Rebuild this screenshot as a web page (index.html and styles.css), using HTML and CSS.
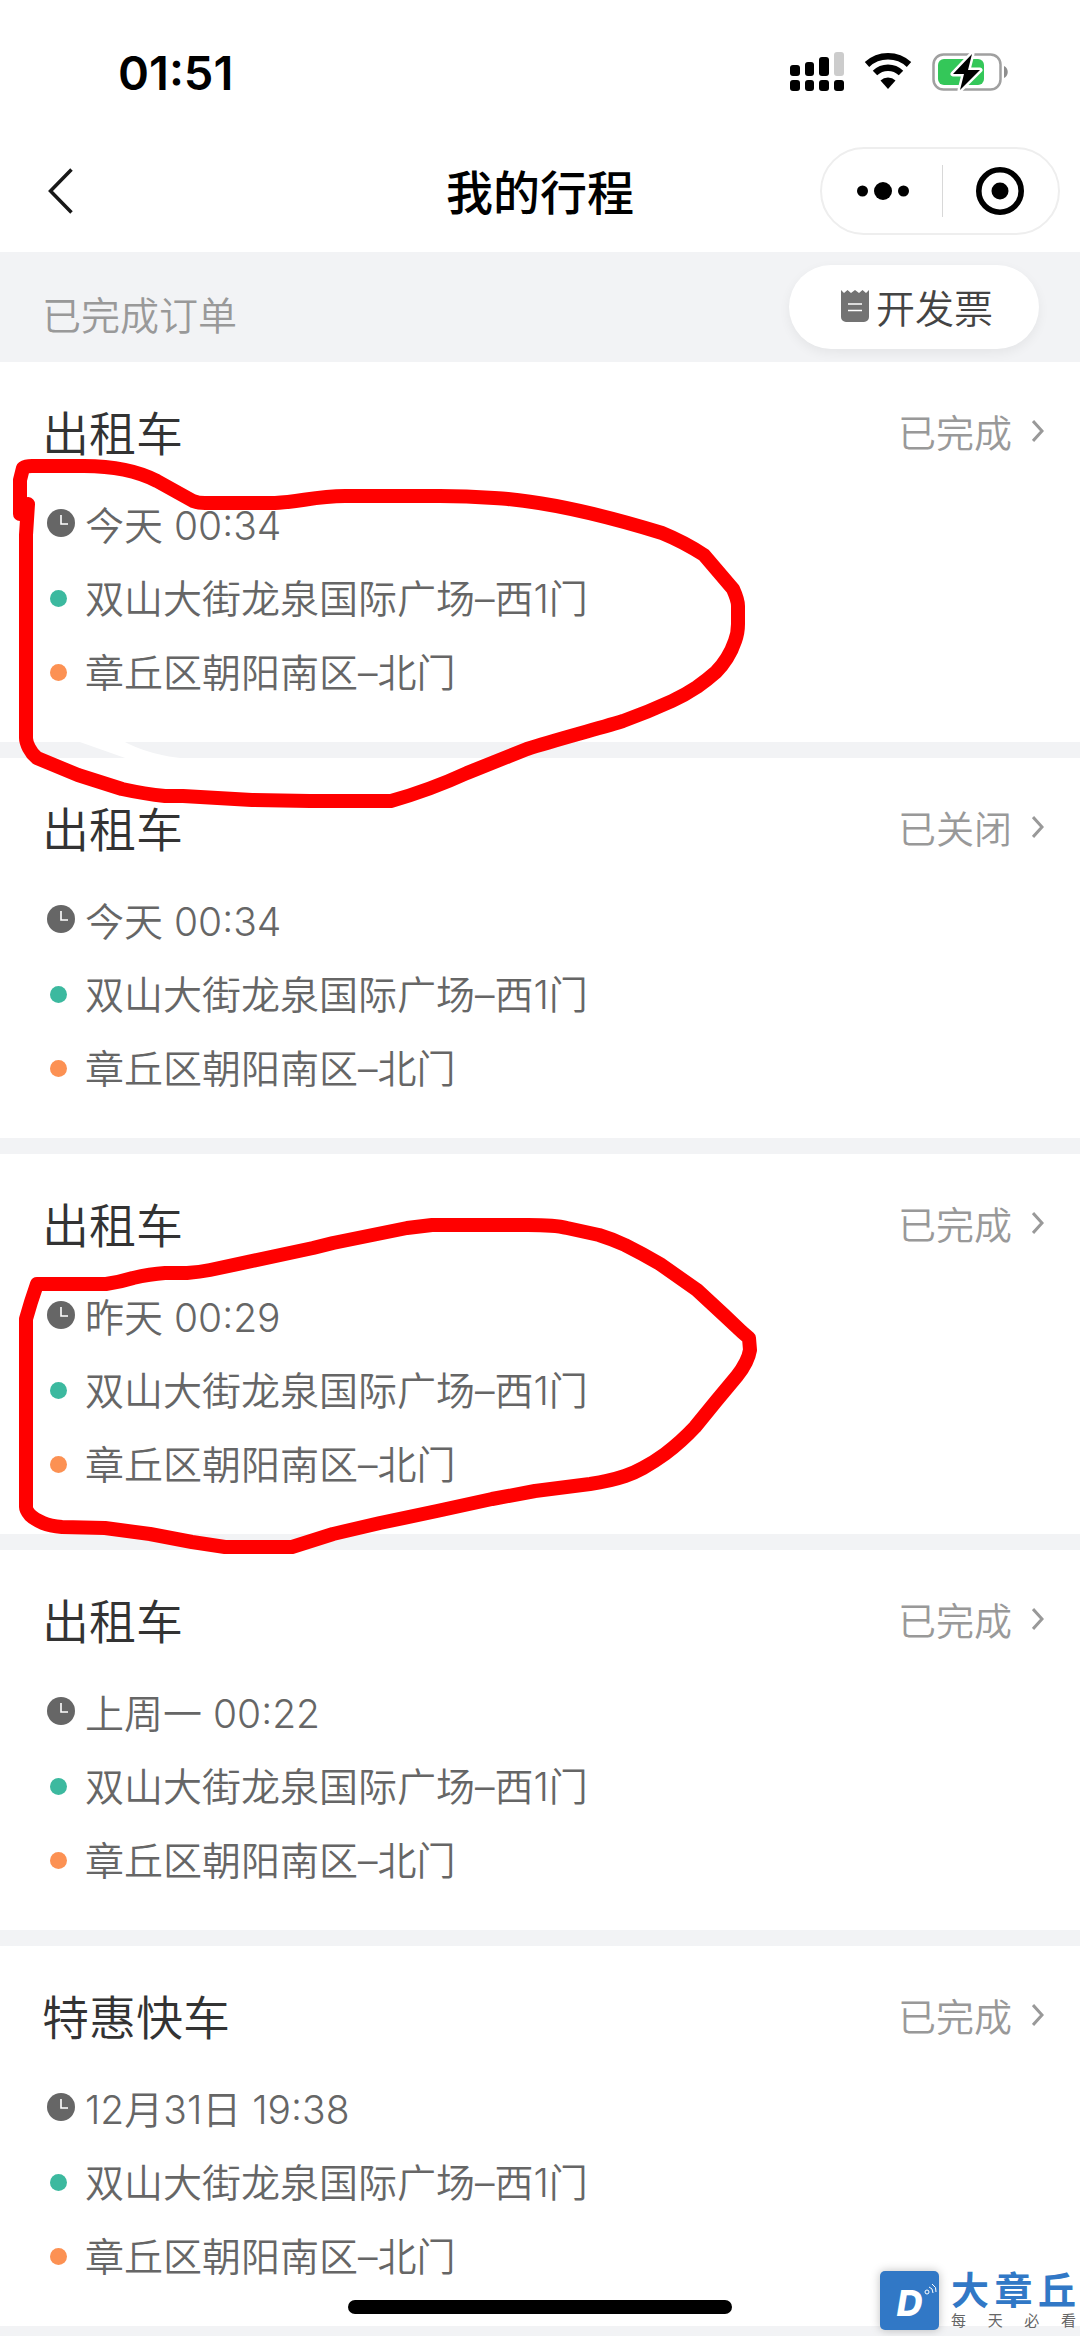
FILE: index.html
```html
<!DOCTYPE html>
<html lang="zh-CN">
<head>
    <meta charset="UTF-8">
    <meta name="viewport" content="width=device-width, initial-scale=1.0">
    <title>我的行程</title>
    <link rel="stylesheet" href="styles.css">
</head>
<body>
    <!-- 图标 -->
    <svg class="sprite" aria-hidden="true">
        <symbol id="clock" viewBox="0 0 28 28">
            <circle cx="14" cy="14" r="14" fill="#666"/>
            <path d="M14 6v9h7" fill="none" stroke="#fff" stroke-width="1.6"/>
        </symbol>
        <symbol id="arrow" viewBox="0 0 12 22">
            <path d="M1 1l9 10-9 10" fill="none" stroke="#999" stroke-width="3"/>
        </symbol>
    </svg>

    <div class="status-bar">
        <span class="clock">01:51</span>
        <div class="signals">
            <svg width="54" height="40" viewBox="0 0 54 40">
                <rect x="0" y="13" width="10" height="11" rx="3"/>
                <rect x="15" y="10" width="9" height="14" rx="3"/>
                <rect x="29" y="5" width="10" height="19" rx="3"/>
                <rect x="44" y="0" width="10" height="24" rx="3" fill="#ccc"/>
                <rect x="0" y="28" width="10" height="11" rx="3"/>
                <rect x="15" y="28" width="9" height="11" rx="3"/>
                <rect x="29" y="28" width="10" height="11" rx="3"/>
                <rect x="44" y="28" width="10" height="11" rx="3"/>
            </svg>
            <svg width="48" height="40" viewBox="0 0 48 40">
                <path d="M3 12.500a31 31 0 0 1 42 0" fill="none" stroke="#000" stroke-width="6.500"/>
                <path d="M11 21a19 19 0 0 1 26 0" fill="none" stroke="#000" stroke-width="6.500"/>
                <path d="M16.500 28.500a11 11 0 0 1 15 0L24 37z"/>
            </svg>
            <svg width="76" height="40" viewBox="0 0 76 40">
                <rect x="1.500" y="2.500" width="67" height="35" rx="10" fill="#fff" stroke="#a0a0a0" stroke-width="2.500"/>
                <rect x="6" y="7" width="46" height="26" rx="6" fill="#34c759"/>
                <path d="M72 14c5 2 5 10 0 12z" fill="#8e8e8e"/>
                <path d="M40 2L21 22h11l-4 16 20-20H36z" fill="#000" stroke="#fff" stroke-width="5" stroke-linejoin="round" paint-order="stroke"/>
            </svg>
        </div>
    </div>

    <header class="nav">
        <button class="back" aria-label="返回">
            <svg width="26" height="46" viewBox="0 0 26 46"><path d="M23.500 1.500L2.500 23l21 21.500" fill="none" stroke="#181818" stroke-width="3.500"/></svg>
        </button>
        <h1>我的行程</h1>
        <div class="capsule">
            <button aria-label="更多">
                <svg width="52" height="18" viewBox="0 0 52 18"><circle cx="5.500" cy="9" r="5.500"/><circle cx="26" cy="9" r="9"/><circle cx="46.500" cy="9" r="5.500"/></svg>
            </button>
            <button aria-label="关闭">
                <svg width="48" height="48" viewBox="0 0 48 48"><circle cx="24" cy="24" r="21.200" fill="none" stroke="#000" stroke-width="5.600"/><circle cx="24" cy="24" r="8.500"/></svg>
            </button>
        </div>
    </header>

    <div class="section-bar">
        <h2>已完成订单</h2>
        <button class="invoice">
            <svg width="28" height="34" viewBox="0 0 28 34">
                <path d="M0 1l3 3 3.500-3L10 4l4-3 4 3 3.500-3L25 4l3-3v27a5 5 0 0 1-5 5H5a5 5 0 0 1-5-5z" fill="#737373"/>
                <path d="M7 15h14M7 21.500h14" stroke="#fff" stroke-width="1.600"/>
            </svg>
            <span>开发票</span>
        </button>
    </div>

    <main class="orders">
        <article class="order">
            <div class="top">
                <h3>出租车</h3>
                <a href="#">已完成<svg width="12" height="22"><use href="#arrow"/></svg></a>
            </div>
            <ul>
                <li><i><svg width="28" height="28"><use href="#clock"/></svg></i>今天 00:34</li>
                <li class="from"><i></i>双山大街龙泉国际广场–西1门</li>
                <li class="to"><i></i>章丘区朝阳南区–北门</li>
            </ul>
        </article>
        <article class="order">
            <div class="top">
                <h3>出租车</h3>
                <a href="#">已关闭<svg width="12" height="22"><use href="#arrow"/></svg></a>
            </div>
            <ul>
                <li><i><svg width="28" height="28"><use href="#clock"/></svg></i>今天 00:34</li>
                <li class="from"><i></i>双山大街龙泉国际广场–西1门</li>
                <li class="to"><i></i>章丘区朝阳南区–北门</li>
            </ul>
        </article>
        <article class="order">
            <div class="top">
                <h3>出租车</h3>
                <a href="#">已完成<svg width="12" height="22"><use href="#arrow"/></svg></a>
            </div>
            <ul>
                <li><i><svg width="28" height="28"><use href="#clock"/></svg></i>昨天 00:29</li>
                <li class="from"><i></i>双山大街龙泉国际广场–西1门</li>
                <li class="to"><i></i>章丘区朝阳南区–北门</li>
            </ul>
        </article>
        <article class="order">
            <div class="top">
                <h3>出租车</h3>
                <a href="#">已完成<svg width="12" height="22"><use href="#arrow"/></svg></a>
            </div>
            <ul>
                <li><i><svg width="28" height="28"><use href="#clock"/></svg></i>上周一 00:22</li>
                <li class="from"><i></i>双山大街龙泉国际广场–西1门</li>
                <li class="to"><i></i>章丘区朝阳南区–北门</li>
            </ul>
        </article>
        <article class="order">
            <div class="top">
                <h3>特惠快车</h3>
                <a href="#">已完成<svg width="12" height="22"><use href="#arrow"/></svg></a>
            </div>
            <ul>
                <li><i><svg width="28" height="28"><use href="#clock"/></svg></i>12月31日 19:38</li>
                <li class="from"><i></i>双山大街龙泉国际广场–西1门</li>
                <li class="to"><i></i>章丘区朝阳南区–北门</li>
            </ul>
        </article>
    </main>

    <!-- 手绘标记 -->
    <svg class="marks" width="780" height="1560" viewBox="0 0 780 1560" aria-hidden="true">
        <path class="erased" d="M77 741L128 759H188Q148 755 123 741z"/>
        <path d="M20 514V480L23 468Q26 466 32 466H84Q128 466 157 481Q175 491 193 501Q198 503 205 503H275C300 502 315 496 345 496H440C475 496 490 498 508 499C560 504 610 517 662 533Q684 542 704 555L733 589Q738 600 738 606V624Q738 633 735 641Q732 650 727 658Q722 666 716 672Q707 680 697 687Q685 695 672 701Q648 712 623 721C590 731 555 740 527 749L467 773Q430 790 391 801H310L252 800L183 796H165Q145 794 122 789L78 775L37 758Q32 754 29 748Q26 742 26 738V535L28 504"/>
        <path d="M37 1284H106Q120 1282 133 1278Q150 1274 165 1273H187Q200 1272 210 1270L313 1248L333 1243L407 1228L432 1225H528Q555 1225 567 1228L599 1235Q612 1239 625 1245Q643 1254 660 1264L697 1290L724 1315L742 1332L749 1338L750 1350Q749 1356 746 1362Q742 1370 737 1376L717 1400L695 1427Q681 1442 665 1454Q654 1462 643 1468Q634 1473 625 1476Q610 1481 590 1484L535 1491L492 1499L437 1511L380 1523L333 1534L292 1547H225L192 1542L150 1534L105 1528L62 1527Q50 1526 43 1523Q34 1519 30 1515Q26 1510 26 1507V1319L31 1302z"/>
    </svg>

    <div class="watermark">
        <div class="logo">
            <span>D</span>
            <svg width="14" height="14" viewBox="0 0 14 14"><circle cx="3" cy="9" r="2"/><path d="M5 4q4 1 4 6M8 1q5 3 4 8"/></svg>
        </div>
        <div class="brand">
            <p class="name"><span>大</span><span>章</span><span>丘</span></p>
            <p class="slogan"><span>每</span><span>天</span><span>必</span><span>看</span></p>
        </div>
    </div>
    <div class="home-line"></div>
</body>
</html>
```
FILE: styles.css
```css
*{
    margin: 0;
    padding: 0;
    box-sizing: border-box;
}
body{
    position: relative;
    min-height: 100vh;
    background: #f2f3f5;
    color: #666;
    font-family: Inter, "Noto Sans CJK SC", sans-serif;
    font-size: 39px;
    font-weight: 350;
    overflow-x: hidden;
}
button{
    border: 0;
    background: none;
    font: inherit;
    color: inherit;
    cursor: pointer;
}
svg{
    display: block;
}
ul{
    list-style: none;
}
a{
    text-decoration: none;
}
.sprite{
    position: absolute;
    width: 0;
    height: 0;
}

.status-bar{
    display: flex;
    justify-content: space-between;
    align-items: center;
    height: 144px;
    padding: 0 72px 0 118px;
    background: #fff;
}
.clock{
    color: #000;
    font-size: 47px;
    font-weight: 600;
}
.signals{
    display: flex;
    align-items: center;
    gap: 20px;
}

.nav{
    display: grid;
    grid-template-columns: 1fr auto 1fr;
    align-items: center;
    height: 108px;
    padding: 0 20px 14px;
    background: #fff;
}
.nav h1{
    padding-bottom: 4px;
    color: #000;
    font-size: 47px;
    font-weight: 500;
}
.back{
    justify-self: start;
    padding-left: 28px;
}
.capsule{
    justify-self: end;
    display: flex;
    width: 240px;
    height: 88px;
    padding-left: 3px;
    border: 2px solid #eee;
    border-radius: 44px;
}
.capsule button{
    flex: 1;
    display: flex;
    justify-content: center;
    align-items: center;
    position: relative;
}
.capsule button + button::before{
    content: "";
    position: absolute;
    left: 0;
    top: 16px;
    bottom: 16px;
    width: 1px;
    background: #d8d8d8;
}

.section-bar{
    display: flex;
    justify-content: space-between;
    align-items: center;
    height: 110px;
    padding: 0 41px 0 42px;
}
.section-bar h2{
    padding-top: 12px;
    color: #999;
    font-size: 39px;
    font-weight: 350;
}
.invoice{
    display: flex;
    justify-content: center;
    align-items: center;
    gap: 7px;
    width: 250px;
    height: 84px;
    padding: 0 0 2px 6px;
    border-radius: 42px;
    background: #fff;
    box-shadow: 0 4px 12px rgba(0,0,0,0.06);
    color: #444;
}

.orders{
    display: flex;
    flex-direction: column;
    gap: 16px;
}
.order{
    height: 380px;
    padding: 34px 36px 0 42px;
    background: #fff;
}
.top{
    display: flex;
    justify-content: space-between;
    align-items: center;
    height: 68px;
    margin-bottom: 22px;
}
.top h3{
    color: #333;
    font-size: 47px;
    font-weight: 350;
}
.top a{
    display: flex;
    align-items: center;
    gap: 20px;
    color: #999;
    font-size: 38px;
}
.top a svg{
    margin-top: 2px;
}
.order li{
    display: flex;
    align-items: center;
    height: 74px;
}
.order li i{
    display: flex;
    width: 43px;
    padding-left: 5px;
}
.order .from,
.order .to{
    padding-bottom: 2px;
}
.from i::before,
.to i::before{
    content: "";
    width: 17px;
    height: 17px;
    margin: 4px 0 0 3px;
    border-radius: 50%;
    background: #3cb99f;
}
.to i::before{
    background: #fc9153;
}

.marks{
    position: absolute;
    left: 0;
    top: 0;
    pointer-events: none;
    fill: none;
    stroke: #f00;
    stroke-width: 14px;
    stroke-linecap: round;
    stroke-linejoin: round;
}
.marks .erased{
    fill: #fff;
    stroke: none;
}

.watermark{
    position: absolute;
    right: 4px;
    bottom: 6px;
    display: flex;
    gap: 12px;
}
.logo{
    position: relative;
    width: 59px;
    height: 59px;
    border-radius: 5px;
    background: #3178c6;
    box-shadow: 0 0 10px rgba(0,0,0,0.25);
    color: #fff;
    font-size: 36px;
    font-weight: 800;
    font-style: italic;
    line-height: 64px;
    text-align: center;
}
.logo svg{
    position: absolute;
    right: 1px;
    top: 12px;
    fill: none;
    stroke: #fff;
}
.brand{
    width: 125px;
}
.brand p{
    display: flex;
    justify-content: space-between;
}
.name{
    color: #3178c6;
    font-size: 38px;
    font-weight: 700;
    line-height: 38px;
}
.slogan{
    padding-top: 3px;
    font-size: 15px;
    font-weight: 400;
    line-height: 18px;
}

.home-line{
    position: absolute;
    left: 50%;
    bottom: 22px;
    width: 384px;
    height: 14px;
    margin-left: -192px;
    border-radius: 7px;
    background: #000;
}
```
